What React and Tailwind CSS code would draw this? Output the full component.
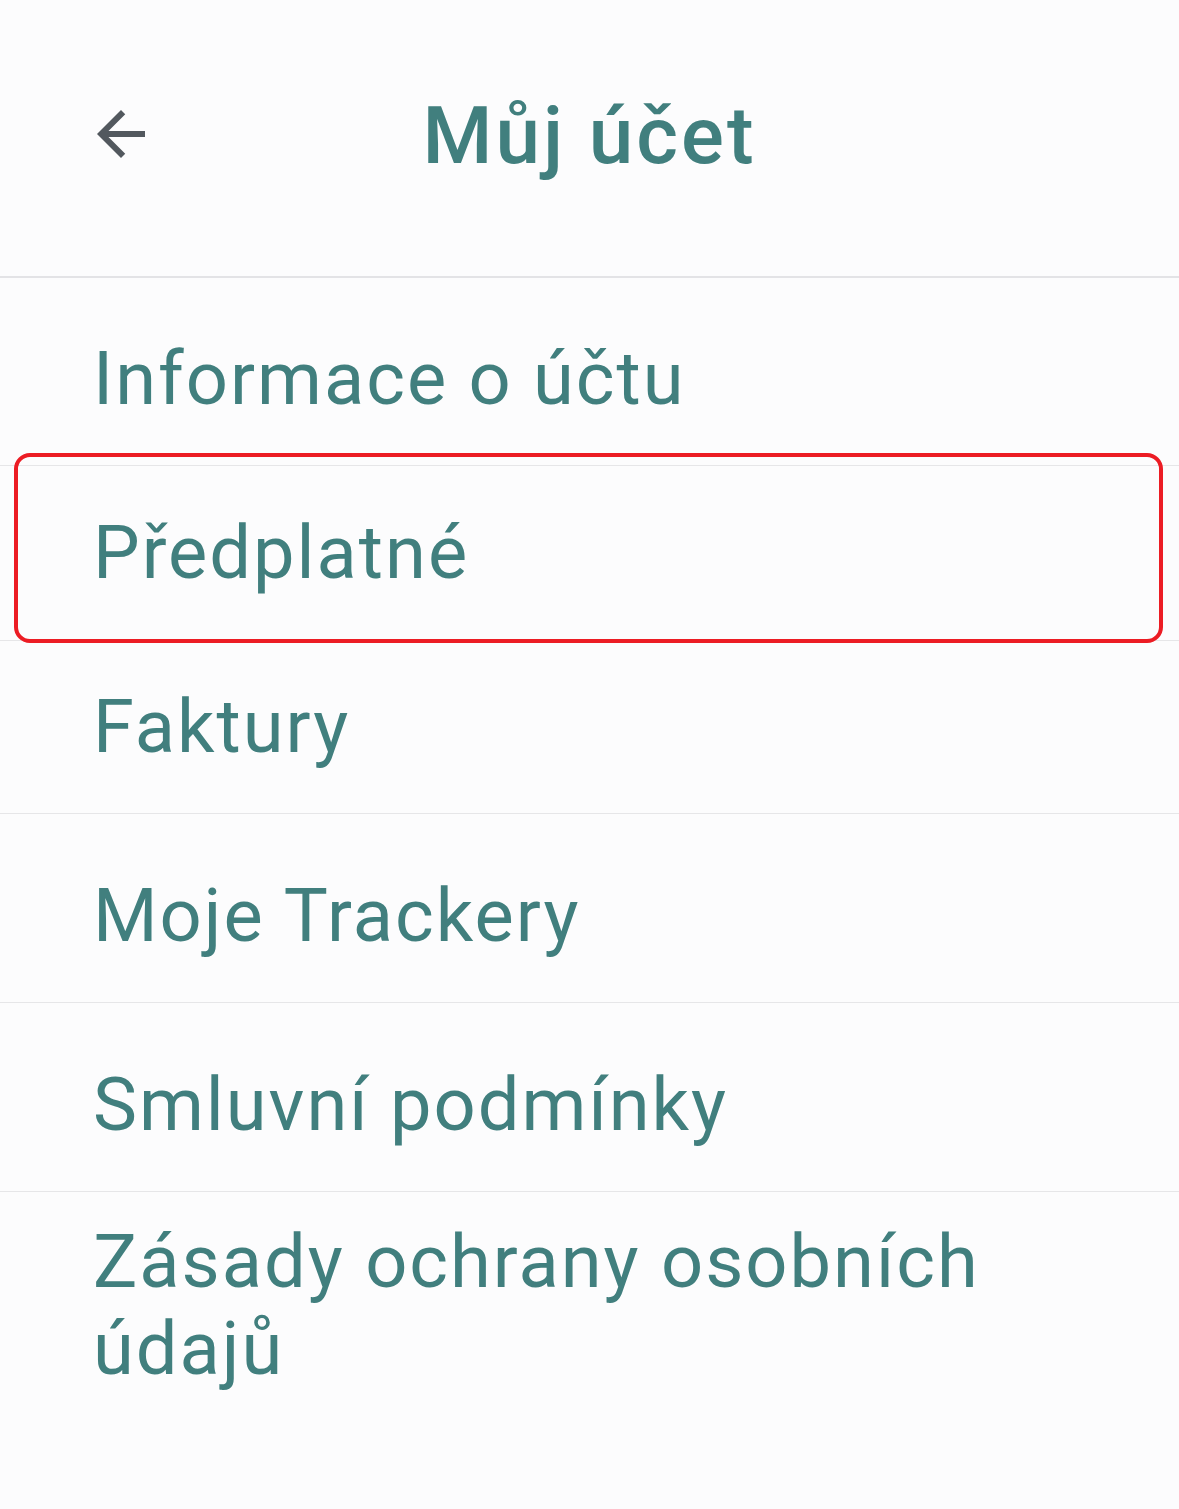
const items = [
  { label: "Informace o účtu", pad: "pt-[57px] pb-[43px]" },
  { label: "Předplatné", pad: "pt-[43px] pb-[44px]", marked: true },
  { label: "Faktury", pad: "pt-[42px] pb-[43px]" },
  { label: "Moje Trackery", pad: "pt-[58px] pb-[43px]" },
  { label: "Smluvní podmínky", pad: "pt-[58px] pb-[43px]" },
  { label: "Zásady ochrany osobních údajů", pad: "pt-[26px] pb-[117px]", last: true },
];

const BackArrow = () => (
  <svg viewBox="0 0 24 24" className="w-[72px] h-[72px]" fill="#52585e">
    <path d="M20 11H7.83l5.59-5.59L12 4l-8 8 8 8 1.41-1.41L7.83 13H20v-2z" />
  </svg>
);

export default function App() {
  return (
    <div
      className="min-h-[1509px] w-[1179px] bg-[#fcfcfd] overflow-hidden"
      style={{ fontFamily: "Roboto, 'Noto Sans', sans-serif" }}
    >
      {/* Header */}
      <header className="h-[278px] border-b-2 border-[#e3e3e6] grid grid-cols-[1fr_auto_1fr] items-start">
        <div className="pl-[85px] pt-[98px]">
          <BackArrow />
        </div>
        <h1 className="pt-[89px] text-[80px] leading-[94px] font-medium text-[#417f7e] tracking-[3px]">
          Můj účet
        </h1>
        <div />
      </header>

      {/* Menu list */}
      <ul>
        {items.map((it) => (
          <li
            key={it.label}
            className={`relative px-[93px] ${it.pad} ${it.last ? "" : "border-b border-[#e6e6e8]"}`}
          >
            <span className="block text-[74px] leading-[87px] text-[#417f7e] tracking-[2px] max-w-[960px]">
              {it.label}
            </span>
            {it.marked && (
              <div className="pointer-events-none absolute left-[14px] right-[16px] -top-[13px] -bottom-[3px] rounded-[16px] border-[4px] border-[#ec1c24]" />
            )}
          </li>
        ))}
      </ul>
    </div>
  );
}
